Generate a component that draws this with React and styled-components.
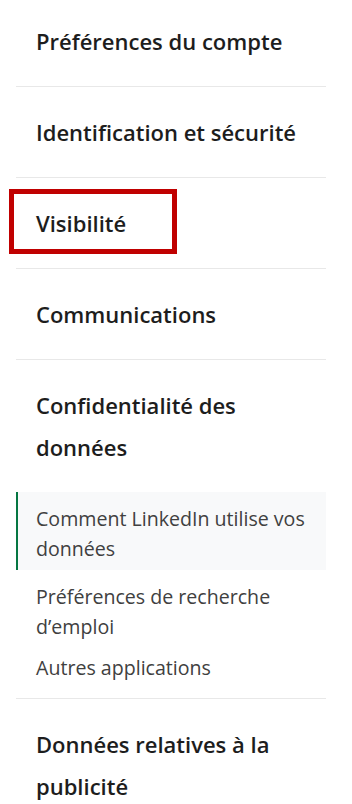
import React from "react";
import styled, { createGlobalStyle } from "styled-components";

const GlobalStyle = createGlobalStyle`
  body {
    margin: 0;
    background: #ffffff;
    font-family: "Open Sans", "Noto Sans", sans-serif;
  }
`;

const Nav = styled.nav`
  width: 310px;
  margin: -4px 0 0 16px;
  display: flex;
  flex-direction: column;
`;

const Section = styled.div`
  position: relative;
  display: flex;
  flex-direction: column;
  border-bottom: ${({ last }) => (last ? "none" : "1px solid #e8e8e8")};
  padding-bottom: ${({ withList }) => (withList ? "9px" : "0")};
`;

const Heading = styled.div`
  padding: 24px 12px 24px 20px;
  font-size: 22px;
  font-weight: 600;
  line-height: 42px;
  color: #1d1d1d;
`;

const SubList = styled.div`
  display: flex;
  flex-direction: column;
`;

const SubItem = styled.div`
  padding: ${({ active }) => (active ? "12px 12px 7px 18px" : "6px 12px 6px 18px")};
  margin-bottom: ${({ active }) => (active ? "6px" : "0")};
  font-size: 19.6px;
  line-height: 29.5px;
  color: #404040;
  border-left: 2px solid ${({ active }) => (active ? "#057642" : "transparent")};
  background: ${({ active }) => (active ? "#f8f9fa" : "transparent")};
`;

const Highlight = styled.div`
  position: absolute;
  left: -7px;
  top: 11px;
  width: 168px;
  height: 65px;
  box-sizing: border-box;
  border: 5px solid #c00000;
  pointer-events: none;
`;

const sections = [
  { title: "Préférences du compte" },
  { title: "Identification et sécurité" },
  { title: "Visibilité", highlighted: true },
  { title: "Communications" },
  {
    title: "Confidentialité des données",
    items: [
      { label: "Comment LinkedIn utilise vos données", active: true },
      { label: "Préférences de recherche d’emploi" },
      { label: "Autres applications" },
    ],
  },
  { title: "Données relatives à la publicité", last: true },
];

const App = () => {
  return (
    <>
      <GlobalStyle />
      <Nav>
        {sections.map((section) => (
          <Section
            key={section.title}
            last={section.last}
            withList={!!section.items}
          >
            <Heading>{section.title}</Heading>
            {section.highlighted && <Highlight />}
            {section.items && (
              <SubList>
                {section.items.map((item) => (
                  <SubItem key={item.label} active={item.active}>
                    {item.label}
                  </SubItem>
                ))}
              </SubList>
            )}
          </Section>
        ))}
      </Nav>
    </>
  );
};

export default App;
